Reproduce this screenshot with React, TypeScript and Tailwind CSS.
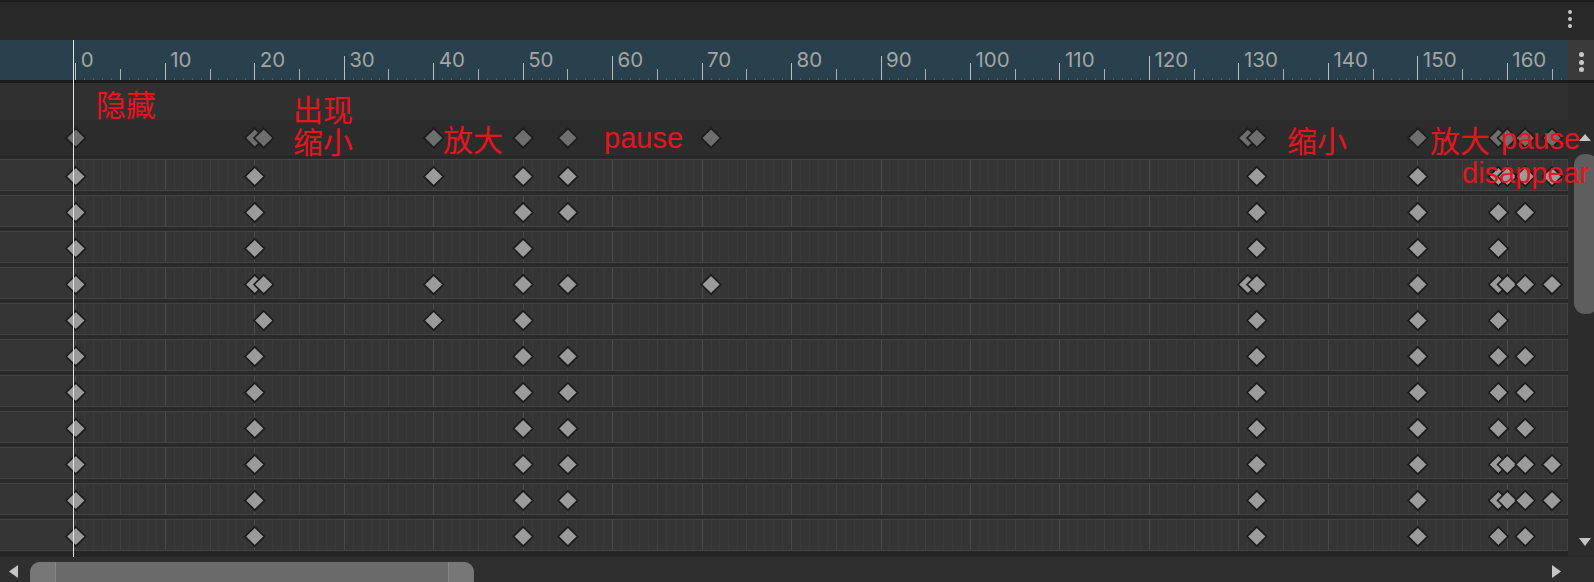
import React from "react";

// timeline scale, measured off the ruler
const FRAME_PX = 8.947;
const ORIGIN_X = 75.8;
const LANE_W = 1568;

const fx = (f: number) => ORIGIN_X + f * FRAME_PX;

const FRAMES: number[] = [];
for (let f = 0; fx(f) < LANE_W; f++) FRAMES.push(f);

const SUMMARY_KEYS = [0, 20, 21, 40, 50, 55, 71, 131, 132, 150, 159, 160, 162, 165];

const TRACKS: number[][] = [
  [0, 20, 40, 50, 55, 132, 150, 159, 160, 162, 165],
  [0, 20, 50, 55, 132, 150, 159, 162],
  [0, 20, 50, 132, 150, 159],
  [0, 20, 21, 40, 50, 55, 71, 131, 132, 150, 159, 160, 162, 165],
  [0, 21, 40, 50, 132, 150, 159],
  [0, 20, 50, 55, 132, 150, 159, 162],
  [0, 20, 50, 55, 132, 150, 159, 162],
  [0, 20, 50, 55, 132, 150, 159, 162],
  [0, 20, 50, 55, 132, 150, 159, 160, 162, 165],
  [0, 20, 50, 55, 132, 150, 159, 160, 162, 165],
  [0, 20, 50, 55, 132, 150, 159, 162],
];

// red notes drawn over the timeline
const NOTES = [
  { text: "隐藏", pos: "left-[96px] top-[91px] text-[30px] leading-[30px]" },
  { text: "出现", pos: "left-[293px] top-[96px] text-[30px] leading-[30px]" },
  { text: "缩小", pos: "left-[293px] top-[128px] text-[30px] leading-[30px]" },
  { text: "放大", pos: "left-[443px] top-[126px] text-[30px] leading-[30px]" },
  { text: "pause", pos: "left-[604px] top-[124px] text-[29px] leading-[29px]" },
  { text: "缩小", pos: "left-[1287px] top-[127px] text-[30px] leading-[30px]" },
  { text: "放大", pos: "left-[1430px] top-[127px] text-[30px] leading-[30px]" },
  { text: "pause", pos: "left-[1501px] top-[125px] text-[29px] leading-[29px]" },
  { text: "disappear", pos: "left-[1462px] top-[159px] text-[29px] leading-[29px]" },
];

function Diamond({ x, y, fill }: { x: number; y: number; fill: string }) {
  const r = 9.7;
  return (
    <polygon
      points={`${x},${y - r} ${x + r},${y} ${x},${y + r} ${x - r},${y}`}
      fill={fill}
      stroke="#1c1c1c"
      strokeWidth={1.7}
    />
  );
}

function Kebab({ size = "w-[5px] h-[5px]" }: { size?: string }) {
  return (
    <div className="flex flex-col gap-[2.5px]">
      <span className={`${size} rounded-full bg-[#c8c8c8]`} />
      <span className={`${size} rounded-full bg-[#c8c8c8]`} />
      <span className={`${size} rounded-full bg-[#c8c8c8]`} />
    </div>
  );
}

function Ruler() {
  return (
    <svg width={LANE_W} height={40} className="block">
      {FRAMES.map((f) => {
        const x = Math.floor(fx(f)) + 0.5;
        if (f % 30 === 0 && f > 0)
          return <line key={f} x1={x} x2={x} y1={16} y2={40} stroke="#bdbdbd" />;
        if (f % 10 === 0)
          return <line key={f} x1={x} x2={x} y1={23} y2={40} stroke="#bdbdbd" />;
        if (f % 5 === 0)
          return <line key={f} x1={x} x2={x} y1={29} y2={40} stroke="#b0b0b0" />;
        return <rect key={f} x={x - 0.5} y={38.5} width={1} height={1} fill="#6f8088" />;
      })}
      {FRAMES.filter((f) => f % 10 === 0).map((f) => (
        <text
          key={`l${f}`}
          x={fx(f) + 5}
          y={27.3}
          fontFamily="Inter, 'Liberation Sans', sans-serif"
          fontSize={20.5}
          fill="#a4a4a4"
        >
          {f}
        </text>
      ))}
    </svg>
  );
}

function GridLines({ h }: { h: number }) {
  return (
    <>
      {FRAMES.map((f) => {
        const x = Math.floor(fx(f)) + 0.5;
        const c = f % 10 === 0 ? "#4b4b4b" : f % 5 === 0 ? "#414141" : "#3a3a3a";
        return <line key={f} x1={x} x2={x} y1={0} y2={h} stroke={c} />;
      })}
    </>
  );
}

function Track({ keys }: { keys: number[] }) {
  return (
    <div className="h-[32px] w-[1568px] border-y border-r border-[#434343] bg-[#353535]">
      <svg width={1567} height={30} className="block overflow-visible">
        <GridLines h={30} />
        {keys.map((k) => (
          <Diamond key={k} x={fx(k)} y={16.5} fill="#9b9b9b" />
        ))}
      </svg>
    </div>
  );
}

function UpArrow() {
  return (
    <svg width={12} height={7} className="block">
      <polygon points="6,0 12,7 0,7" fill="#c4c4c4" />
    </svg>
  );
}

function DownArrow() {
  return (
    <svg width={12} height={8} className="block">
      <polygon points="0,0 12,0 6,8" fill="#c4c4c4" />
    </svg>
  );
}

export default function App() {
  return (
    <div className="relative w-[1594px] h-[582px] overflow-hidden bg-[#2a2a2a] flex flex-col [font-family:'Liberation_Sans','Noto_Sans_CJK_SC',sans-serif]">
      <div className="h-[2px] bg-[#1c1c1c]" />

      {/* toolbar */}
      <div className="h-[38px] bg-[#282828] flex justify-end items-start pt-[7.5px] pr-[22px]">
        <Kebab size="w-[4.5px] h-[4.5px]" />
      </div>

      {/* ruler */}
      <div className="h-[40px] flex">
        <div className="w-[1568px] bg-[#28414c]">
          <Ruler />
        </div>
        <div className="flex-1 bg-[#3a3a3a] flex items-center justify-center pt-[4px]">
          <Kebab />
        </div>
      </div>
      <div className="h-[3px] bg-[#1a1a1a]" />

      {/* lanes + vertical scrollbar */}
      <div className="flex h-[474px]">
        <div className="w-[1568px] flex flex-col">
          <div className="h-[37px] bg-[#303030]" />
          <div className="h-[36px] bg-[#2c2c2c]">
            <svg width={1568} height={36} className="block">
              {SUMMARY_KEYS.map((k) => (
                <Diamond key={k} x={fx(k)} y={18} fill="#6e6e6e" />
              ))}
            </svg>
          </div>
          <div className="h-[2px] bg-[#262626]" />
          <div className="flex flex-col gap-[4px] pt-[1px]">
            {TRACKS.map((keys, i) => (
              <Track key={i} keys={keys} />
            ))}
          </div>
          <div className="flex-1 bg-[#262626]" />
        </div>
        <div className="flex-1 bg-[#2c2c2c] flex flex-col items-start pt-[51px] pb-[11px]">
          <div className="ml-[11px]">
            <UpArrow />
          </div>
          <div className="mt-[13px] ml-[6px] w-[24px] h-[160px] rounded-[11px] bg-[#5e5e5e]" />
          <div className="flex-1" />
          <div className="ml-[11px]">
            <DownArrow />
          </div>
        </div>
      </div>

      {/* horizontal scrollbar */}
      <div className="h-[25px] bg-[#2f2f2f] flex items-start">
        <svg width={9} height={13} className="block ml-[9px] mt-[8px]">
          <polygon points="9,0 9,13 0,6.5" fill="#c6c6c6" />
        </svg>
        <div className="ml-[12px] mt-[5px] w-[444px] h-[28px] rounded-[10px] overflow-hidden flex bg-[#6a6a6a]">
          <div className="w-[25px] bg-[#777777]" />
          <div className="w-px bg-[#868686]" />
          <div className="flex-1" />
          <div className="w-px bg-[#868686]" />
          <div className="w-[25px] bg-[#777777]" />
        </div>
        <div className="flex-1" />
        <svg width={9} height={13} className="block mr-[33px] mt-[8px]">
          <polygon points="0,0 9,6.5 0,13" fill="#c6c6c6" />
        </svg>
      </div>

      {/* playhead */}
      <div className="absolute left-[73px] top-[40px] w-px h-[517px] bg-[#e4e4e4]" />

      {NOTES.map((n, i) => (
        <span key={i} className={`absolute ${n.pos} text-[#e8141e] whitespace-nowrap`}>
          {n.text}
        </span>
      ))}
    </div>
  );
}
